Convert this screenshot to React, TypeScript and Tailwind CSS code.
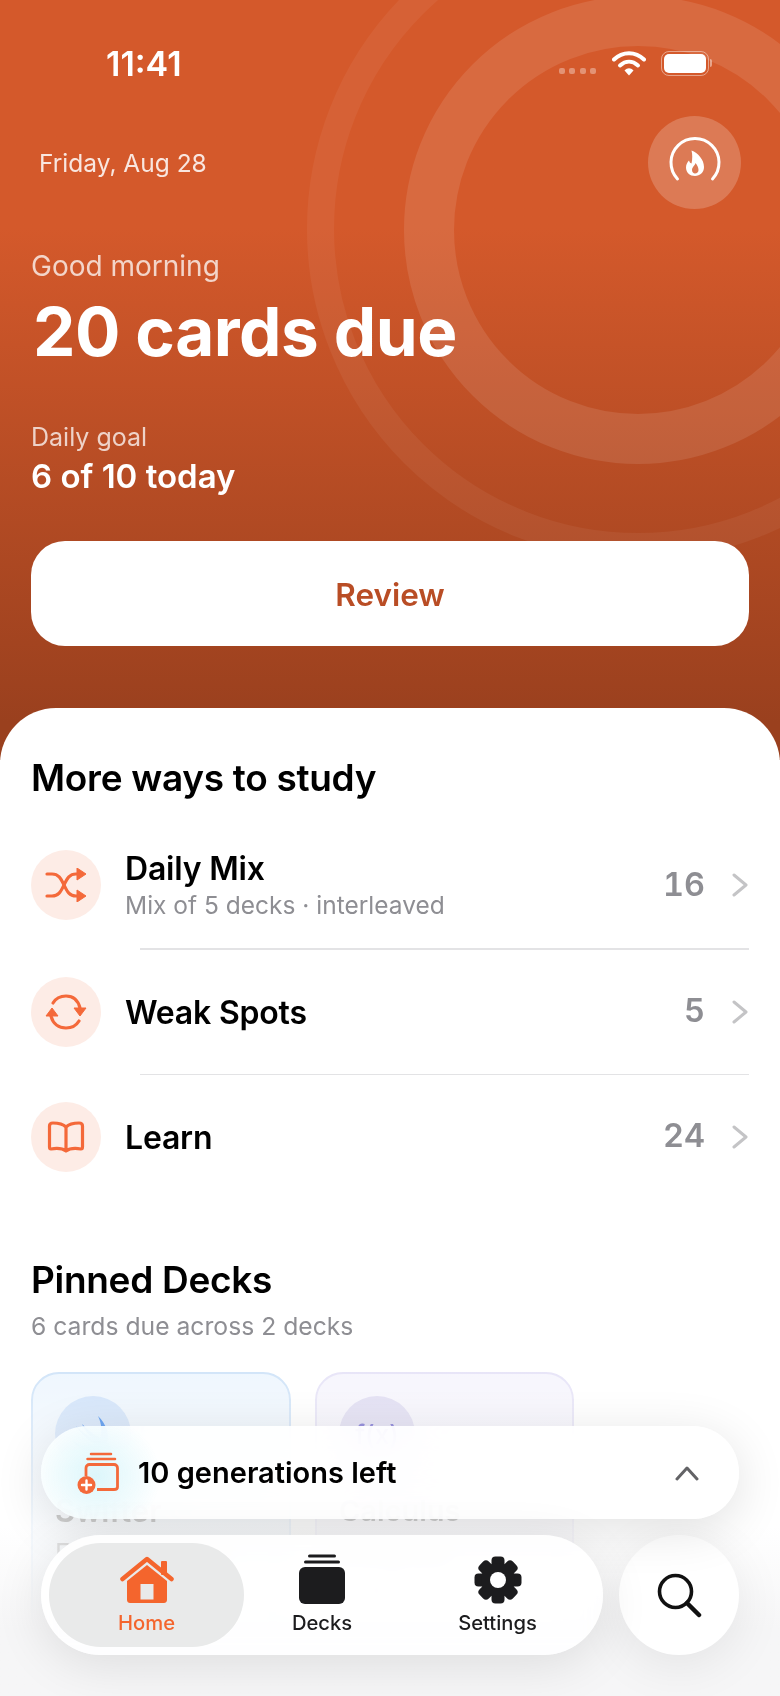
import React from "react";

const Wifi = () => (
  <svg width="34" height="26" viewBox="0 0 34 26" fill="none">
    <path d="M2 9.500C10.500 1 23.500 1 32 9.500" stroke="white" strokeWidth="4" strokeLinecap="round" />
    <path d="M8 15.500C13.500 10.500 20.500 10.500 26 15.500" stroke="white" strokeWidth="4" strokeLinecap="round" />
    <path d="M12.500 20.500C15.500 17.500 18.500 17.500 21.500 20.500L17 25.500Z" fill="white" />
  </svg>
);

const Flame = () => (
  <svg width="56" height="56" viewBox="0 0 56 56" fill="none">
    <path d="M10.500 44A24 24 0 1 1 45.500 44" stroke="white" strokeWidth="3" strokeLinecap="round" />
    <path
      fillRule="evenodd"
      clipRule="evenodd"
      fill="white"
      d="M24.500 15.500C31 18 37 24.500 37 32C37 37.500 33 41 28 41C23 41 19 37.500 19 32.500C19 29.500 20.500 27 22 25.500C22.500 27 23 28 24.500 28.500C25.500 24 25.500 19.500 24.500 15.500ZM28.500 28C28 30.500 25 32 25 35C25 37 26.500 38.500 28 38.500C30 38.500 31.500 37 31.500 35C31.500 32 30 30 28.500 28Z"
    />
  </svg>
);

const ShuffleIcon = () => (
  <svg width="42" height="34" viewBox="0 0 42 34" fill="none">
    <path d="M2 6H7C14 6 16 11 19 17C22 23 24 28 31 28H34" stroke="#f4693a" strokeWidth="3.200" strokeLinecap="round" />
    <path d="M2 28H7C14 28 16 23 19 17C22 11 24 6 31 6H34" stroke="#f4693a" strokeWidth="3.200" strokeLinecap="round" />
    <path d="M32 0L41 6L32 12Z M32 22L41 28L32 34Z" fill="#f4693a" stroke="#f4693a" strokeLinejoin="round" />
  </svg>
);

const SyncIcon = () => (
  <svg width="42" height="36" viewBox="0 0 42 36" fill="none">
    <path d="M8 9C11 4 16 2 21 2C28 2 33 6 35 14" stroke="#f4693a" strokeWidth="3.200" strokeLinecap="round" />
    <path d="M34 27C31 32 26 34 21 34C14 34 8 30 6 22" stroke="#f4693a" strokeWidth="3.200" strokeLinecap="round" />
    <path d="M29 14H41L35 22Z M1 22H13L7 14Z" fill="#f4693a" stroke="#f4693a" strokeLinejoin="round" />
  </svg>
);

const BookIcon = () => (
  <svg width="38" height="32" viewBox="0 0 38 32" fill="none">
    <path
      d="M19 6C16 3 12 2 6 2C4 2 2.500 3 2.500 5V26C2.500 27 3 28 4 28C10 27 15 27 19 30C23 27 28 27 34 28C35 28 35.500 27 35.500 26V5C35.500 3 34 2 32 2C26 2 22 3 19 6ZM19 6V30"
      stroke="#f4693a"
      strokeWidth="3.200"
      strokeLinejoin="round"
      strokeLinecap="round"
    />
  </svg>
);

const Chevron = ({ dir = "right" }: { dir?: "right" | "up" }) =>
  dir === "right" ? (
    <svg width="16" height="24" viewBox="0 0 16 24" fill="none">
      <path d="M2 2L14 12L2 22" stroke="#c4c4c6" strokeWidth="3" strokeLinecap="round" strokeLinejoin="round" />
    </svg>
  ) : (
    <svg width="24" height="16" viewBox="0 0 24 16" fill="none">
      <path d="M2 14L12 3L22 14" stroke="#636366" strokeWidth="3" strokeLinecap="round" strokeLinejoin="round" />
    </svg>
  );

const GenIcon = () => (
  <svg width="42" height="42" viewBox="0 0 42 42" fill="none">
    <path d="M14 2H34M10.500 7H38" stroke="#f4693a" strokeWidth="2.500" strokeLinecap="round" />
    <path d="M9 24V16C9 14 10.500 12.500 12.500 12.500H37C39 12.500 40.500 14 40.500 16V35C40.500 37 39 37.500 37 37.500H20" stroke="#f4693a" strokeWidth="2.800" />
    <circle cx="9.500" cy="33" r="9" fill="#f4693a" />
    <path d="M9.500 28.500V37.500M5 33H14" stroke="white" strokeWidth="2.400" strokeLinecap="round" />
  </svg>
);

const HomeIcon = () => (
  <svg width="54" height="48" viewBox="0 0 54 48" fill="none">
    <rect x="41" y="5" width="6" height="14" rx="1" fill="#f4652d" />
    <path d="M2.500 23L27 3L51.500 23" stroke="#f4652d" strokeWidth="4.500" strokeLinecap="round" strokeLinejoin="round" />
    <path
      fillRule="evenodd"
      clipRule="evenodd"
      fill="#f4652d"
      d="M27 9L47 25V44C47 46 45.500 47 44 47H10C8.500 47 7 46 7 44V25ZM20.500 28V43.500H33.500V28Z"
    />
  </svg>
);

const DecksIcon = () => (
  <svg width="48" height="50" viewBox="0 0 48 50" fill="none">
    <rect x="10" y="0.500" width="28" height="3" rx="1.500" fill="#1c1c1e" />
    <rect x="6" y="6.500" width="36" height="3" rx="1.500" fill="#1c1c1e" />
    <rect x="1" y="13" width="46" height="37" rx="6" fill="#1c1c1e" />
  </svg>
);

const GearIcon = () => (
  <svg width="48" height="48" viewBox="0 0 48 48">
    {[0, 45, 90, 135].map((a) => (
      <rect key={a} x="17.500" y="0.500" width="13" height="47" rx="4" fill="#1c1c1e" transform={`rotate(${a} 24 24)`} />
    ))}
    <circle cx="24" cy="24" r="17" fill="#1c1c1e" />
    <circle cx="24" cy="24" r="8" fill="white" />
  </svg>
);

const SearchIcon = () => (
  <svg width="46" height="46" viewBox="0 0 46 46" fill="none">
    <circle cx="19.500" cy="19.500" r="16" stroke="#111" strokeWidth="3.600" />
    <path d="M31 31L43 43" stroke="#111" strokeWidth="4.500" strokeLinecap="round" />
  </svg>
);

const BirdIcon = () => (
  <svg width="50" height="44" viewBox="0 0 50 44" fill="none">
    <path
      d="M30 4C38 12 42 22 39 30C43 35 44 38 43 40C40 36 36 36 32 38C22 42 10 38 4 28C12 34 20 35 26 32C18 26 12 20 8 14C14 20 20 24 24 26C20 22 16 17 14 12C20 18 26 23 32 26C34 20 34 12 30 4Z"
      fill="#2f80ed"
    />
  </svg>
);

const Row = ({
  icon,
  title,
  sub,
  count,
  rowHeight,
}: {
  icon: React.ReactNode;
  title: string;
  sub?: string;
  count: string;
  rowHeight: string;
}) => (
  <div className={`flex items-center ${rowHeight}`}>
    <div className="flex h-[70px] w-[70px] shrink-0 items-center justify-center rounded-full bg-[#fdece6]">{icon}</div>
    <div className="ml-[24px] min-w-0 flex-1 pt-[2px]">
      <div className="text-[32px] leading-[38px] font-semibold tracking-[-0.2px] text-black">{title}</div>
      {sub && <div className="text-[24.500px] leading-[34px] text-[#8e8e93]">{sub}</div>}
    </div>
    <div className="text-[32.500px] font-semibold text-[#8e8e93] tabular-nums">{count}</div>
    <div className="mr-[1px] ml-[27px] flex w-[16px] justify-end">
      <Chevron />
    </div>
  </div>
);

const Separator = () => <div className="ml-[109px] h-[1.500px] bg-[#e3e3e5]" />;

const Tab = ({ icon, label, active }: { icon: React.ReactNode; label: string; active?: boolean }) => (
  <div
    className={`flex h-[104px] flex-col items-center justify-center rounded-[52px] ${active ? "bg-[#e9eaea]" : ""}`}
  >
    <div className="flex h-[50px] items-end">{icon}</div>
    <div className={`mt-[5px] text-[20.200px] leading-[28px] font-medium ${active ? "text-[#f4652d]" : "text-[#1c1c1e]"}`}>
      {label}
    </div>
  </div>
);

export default function App() {
  return (
    <div className="relative h-[1696px] w-[780px] overflow-hidden bg-white font-['Inter',sans-serif]">
      {/* Hero */}
      <div className="relative h-[760px] overflow-hidden bg-linear-to-b from-[#d4592b] from-30% to-[#9a401e] to-95% px-[31px] text-white">
        <div className="absolute top-[-102px] left-[307px] h-[662px] w-[662px] rounded-full border-[27px] border-white/5" />
        <div className="absolute top-[-4px] left-[404px] h-[468px] w-[468px] rounded-full border-[50px] border-white/10" />

        <div className="relative flex flex-col">
          <div className="mt-[45px] flex h-[36px] items-center justify-between pr-[37px] pl-[75px]">
            <span className="text-[34px] font-semibold">11:41</span>
            <div className="flex items-center">
              <div className="mt-[16px] flex gap-[4.500px]">
                {[0, 1, 2, 3].map((i) => (
                  <span key={i} className="h-[6px] w-[6px] rounded-[2px] bg-white/35" />
                ))}
              </div>
              <div className="ml-[16px]">
                <Wifi />
              </div>
              <div className="ml-[15px] flex items-center">
                <div className="h-[25px] w-[48px] rounded-[8px] border-[1.500px] border-white/45 p-[2px]">
                  <div className="h-full w-full rounded-[5px] bg-white" />
                </div>
                <div className="ml-[1px] h-[8px] w-[2px] rounded-r-full bg-white/45" />
              </div>
            </div>
          </div>

          <div className="mt-[35px] flex h-[93px] items-center justify-between pr-[8px] pl-[8px]">
            <span className="pt-[2px] text-[24.500px] text-white/85">Friday, Aug 28</span>
            <div className="flex h-[93px] w-[93px] items-center justify-center rounded-full bg-white/20">
              <Flame />
            </div>
          </div>

          <div className="mt-[37px] text-[28px] leading-[40px] text-white/75">Good morning</div>
          <div className="mt-[8px] pl-[2px] text-[67.400px] leading-[76px] font-bold tracking-[-0.5px]">20 cards due</div>
          <div className="mt-[51px] text-[25px] leading-[32px] text-white/75">Daily goal</div>
          <div className="mt-[3px] text-[33px] leading-[40px] font-semibold">6 of 10 today</div>
          <div className="mt-[45px] flex h-[105px] items-center justify-center rounded-[34px] bg-white pt-[2px] text-[31.500px] font-semibold text-[#b94d25]">
            Review
          </div>
        </div>
      </div>

      {/* Sheet */}
      <div className="relative -mt-[52px] rounded-t-[56px] bg-white px-[31px] pt-[48px]">
        <div className="text-[37px] leading-[44px] font-semibold tracking-[-0.3px] text-black">More ways to study</div>
        <div className="mt-[22px]">
          <Row rowHeight="h-[126px]" icon={<ShuffleIcon />} title="Daily Mix" sub="Mix of 5 decks · interleaved" count="16" />
          <Separator />
          <Row rowHeight="h-[124px]" icon={<SyncIcon />} title="Weak Spots" count="5" />
          <Separator />
          <Row rowHeight="h-[123px]" icon={<BookIcon />} title="Learn" count="24" />
        </div>

        <div className="mt-[60px] text-[37px] leading-[44px] font-semibold tracking-[-0.3px] text-black">Pinned Decks</div>
        <div className="mt-[8px] text-[24.700px] leading-[32px] text-[#8e8e93]">6 cards due across 2 decks</div>

        <div className="mt-[30px] flex gap-[24px]">
          <div className="h-[270px] w-[260px] rounded-[28px] border-2 border-[#cfe3f8] bg-[#eef6fe] p-[22px]">
            <div className="flex h-[76px] w-[76px] items-center justify-center rounded-full bg-[#cfe2fa]">
              <BirdIcon />
            </div>
            <div className="mt-[20px] text-[31px] leading-[38px] font-semibold text-[#555]">Swifter</div>
            <div className="mt-[6px] text-[26px] leading-[34px] text-[#777]">Fundamentals</div>
            <div className="mt-[2px] text-[22px] leading-[30px] text-[#999]">3 due</div>
          </div>
          <div className="h-[270px] w-[259px] rounded-[28px] border-2 border-[#e6e3f7] bg-[#f6f5fd] p-[22px]">
            <div className="flex h-[76px] w-[76px] items-center justify-center rounded-full bg-[#dfdcf2] text-[26px] font-medium text-[#6c63cf]">
              f(x)
            </div>
            <div className="mt-[20px] text-[29px] leading-[38px] font-semibold text-[#555]">Calculus</div>
            <div className="mt-[6px] text-[26px] leading-[34px] text-[#777]">Integrals</div>
            <div className="mt-[2px] text-[22px] leading-[30px] text-[#999]">3 due</div>
          </div>
        </div>
      </div>

      {/* Bottom fade */}
      <div className="absolute inset-x-0 bottom-0 h-[340px] bg-linear-to-b from-white/0 via-white/75 via-50% to-[#f6f6f7] to-80%" />

      {/* Floating controls */}
      <div className="absolute top-[1426px] right-[41px] left-[41px] flex flex-col gap-[16px]">
        <div className="relative flex h-[93px] items-center overflow-hidden rounded-[47px] bg-white/90 pr-[40px] pl-[36px] shadow-[0_10px_50px_rgba(0,0,0,0.12)] backdrop-blur-xl backdrop-saturate-200">
          <div className="absolute top-[-10px] left-[-10px] h-[120px] w-[130px] bg-[radial-gradient(closest-side,#dcf6fb,transparent)]" />
          <div className="relative">
            <GenIcon />
          </div>
          <div className="relative ml-[19px] flex-1 text-[29px] font-semibold text-black">10 generations left</div>
          <div className="relative">
            <Chevron dir="up" />
          </div>
        </div>
        <div className="flex gap-[16px]">
          <div className="grid h-[120px] w-[562px] grid-cols-[195px_156px_1fr] rounded-[60px] bg-white/90 p-[8px] shadow-[0_10px_50px_rgba(0,0,0,0.1)] backdrop-blur-sm">
            <Tab active icon={<HomeIcon />} label="Home" />
            <Tab icon={<DecksIcon />} label="Decks" />
            <Tab icon={<GearIcon />} label="Settings" />
          </div>
          <div className="flex h-[120px] w-[120px] items-center justify-center rounded-full bg-white shadow-[0_10px_50px_rgba(0,0,0,0.08)]">
            <SearchIcon />
          </div>
        </div>
      </div>
    </div>
  );
}
